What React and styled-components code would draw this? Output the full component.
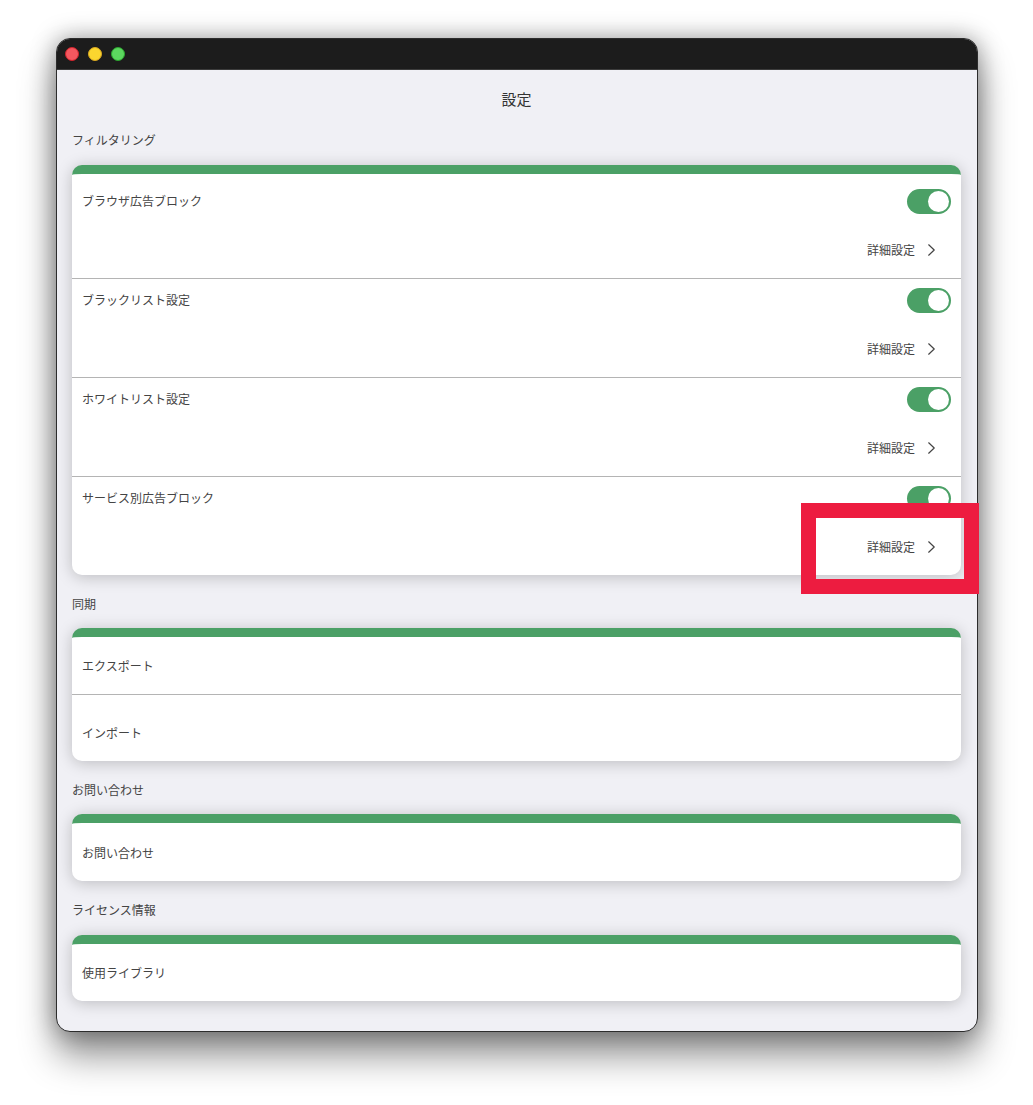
import React from "react";
import styled, { createGlobalStyle } from "styled-components";

const Global = createGlobalStyle`
  html, body { margin: 0; padding: 0; background: #fff; overflow: hidden; }
  body { font-family: "Noto Sans CJK JP", "Noto Sans", sans-serif; }
  * { box-sizing: border-box; }
`;

const Page = styled.div`
  position: relative;
  width: 1033px;
  height: 1105px;
  padding: 38px 55px 0 56px;
  overflow: hidden;
`;

const Window = styled.div`
  width: 922px;
  height: 994px;
  border: 1px solid #2c2c2c;
  border-radius: 14px;
  background: #f0f0f5;
  overflow: hidden;
  box-shadow: 0 24px 36px rgba(0, 0, 0, 0.42), 0 0 24px rgba(0, 0, 0, 0.38);
`;

const TitleBar = styled.div`
  height: 31px;
  background: #1c1c1c;
  border-bottom: 1px solid #3c3c3c;
  display: flex;
  align-items: center;
  gap: 9px;
  padding: 0 8px;
`;

const Light = styled.span`
  width: 14px;
  height: 14px;
  border-radius: 50%;
  background: ${(p) => p.$fill};
  border: 1px solid ${(p) => p.$edge};
`;

const Body = styled.div`
  padding: 15px 16px 0 15px;
`;

const Title = styled.h1`
  margin: 0 0 17px;
  height: 30px;
  line-height: 28px;
  font-size: 15px;
  font-weight: 400;
  text-align: center;
  color: #333;
`;

const SectionLabel = styled.div`
  height: 16px;
  line-height: 16px;
  font-size: 12px;
  color: #444;
  margin-bottom: ${(p) => p.$gap}px;
`;

const Card = styled.section`
  background: #fff;
  border-top: 9px solid #4ba066;
  border-radius: 10px;
  margin-bottom: 21px;
  box-shadow: 0 2px 16px rgba(0, 0, 0, 0.22);
  padding-top: ${(p) => p.$pad || 0}px;
`;

const ToggleRow = styled.div`
  height: ${(p) => (p.$last ? 98 : 99)}px;
  padding: 9px 10px 0;
  border-bottom: ${(p) => (p.$last ? "none" : "1px solid #b4b4b4")};
`;

const RowHead = styled.div`
  display: flex;
  align-items: center;
  justify-content: space-between;
  height: 25px;
`;

const Label = styled.span`
  display: block;
  font-size: 12px;
  line-height: 16px;
  color: #444;
`;

const HeadLabel = styled(Label)`
  padding-bottom: 2px;
`;

const Toggle = styled.span`
  width: 44px;
  height: 25px;
  border-radius: 13px;
  background: #4ba066;
  display: flex;
  justify-content: flex-end;
  align-items: center;
  padding-right: 2px;
`;

const Knob = styled.span`
  width: 21px;
  height: 21px;
  border-radius: 50%;
  background: #fff;
`;

const Detail = styled.div`
  display: flex;
  justify-content: flex-end;
  align-items: center;
  height: 16px;
  margin-top: 28px;
  padding-right: 16px;
  gap: 13px;
  font-size: 12px;
  line-height: 16px;
  color: #444;
`;

const SimpleRow = styled.div`
  padding: ${(p) => p.$top}px 10px 0;
  height: ${(p) => p.$height}px;
  border-bottom: ${(p) => (p.$divider ? "1px solid #b4b4b4" : "none")};
`;

const Highlight = styled.div`
  position: absolute;
  left: 801px;
  top: 503px;
  width: 178px;
  height: 91px;
  border: 15px solid #ed1c40;
  pointer-events: none;
`;

const Chevron = () => (
  <svg width="7" height="12" viewBox="0 0 7 12" fill="none">
    <path d="M0.7 0.8 L6.2 6 L0.7 11.2" stroke="#444" strokeWidth="1.2" strokeLinecap="round" strokeLinejoin="round" />
  </svg>
);

const Filter = ["ブラウザ広告ブロック", "ブラックリスト設定", "ホワイトリスト設定", "サービス別広告ブロック"];

export default function App() {
  return (
    <Page>
      <Global />
      <Window>
        <TitleBar>
          <Light $fill="#f4575f" $edge="#d0232b" />
          <Light $fill="#fbd62f" $edge="#d9a820" />
          <Light $fill="#5cd75f" $edge="#2ba52f" />
        </TitleBar>
        <Body>
          <Title>設定</Title>
          <SectionLabel $gap={17}>フィルタリング</SectionLabel>
          <Card $pad={6}>
            {Filter.map((name, i) => (
              <ToggleRow key={name} $last={i === Filter.length - 1}>
                <RowHead>
                  <HeadLabel>{name}</HeadLabel>
                  <Toggle><Knob /></Toggle>
                </RowHead>
                <Detail>
                  詳細設定
                  <Chevron />
                </Detail>
              </ToggleRow>
            ))}
          </Card>
          <SectionLabel $gap={16}>同期</SectionLabel>
          <Card>
            <SimpleRow $top={21} $height={58} $divider><Label>エクスポート</Label></SimpleRow>
            <SimpleRow $top={30} $height={66}><Label>インポート</Label></SimpleRow>
          </Card>
          <SectionLabel $gap={16}>お問い合わせ</SectionLabel>
          <Card>
            <SimpleRow $top={22} $height={58}><Label>お問い合わせ</Label></SimpleRow>
          </Card>
          <SectionLabel $gap={17}>ライセンス情報</SectionLabel>
          <Card>
            <SimpleRow $top={21} $height={57}><Label>使用ライブラリ</Label></SimpleRow>
          </Card>
        </Body>
      </Window>
      <Highlight />
    </Page>
  );
}
